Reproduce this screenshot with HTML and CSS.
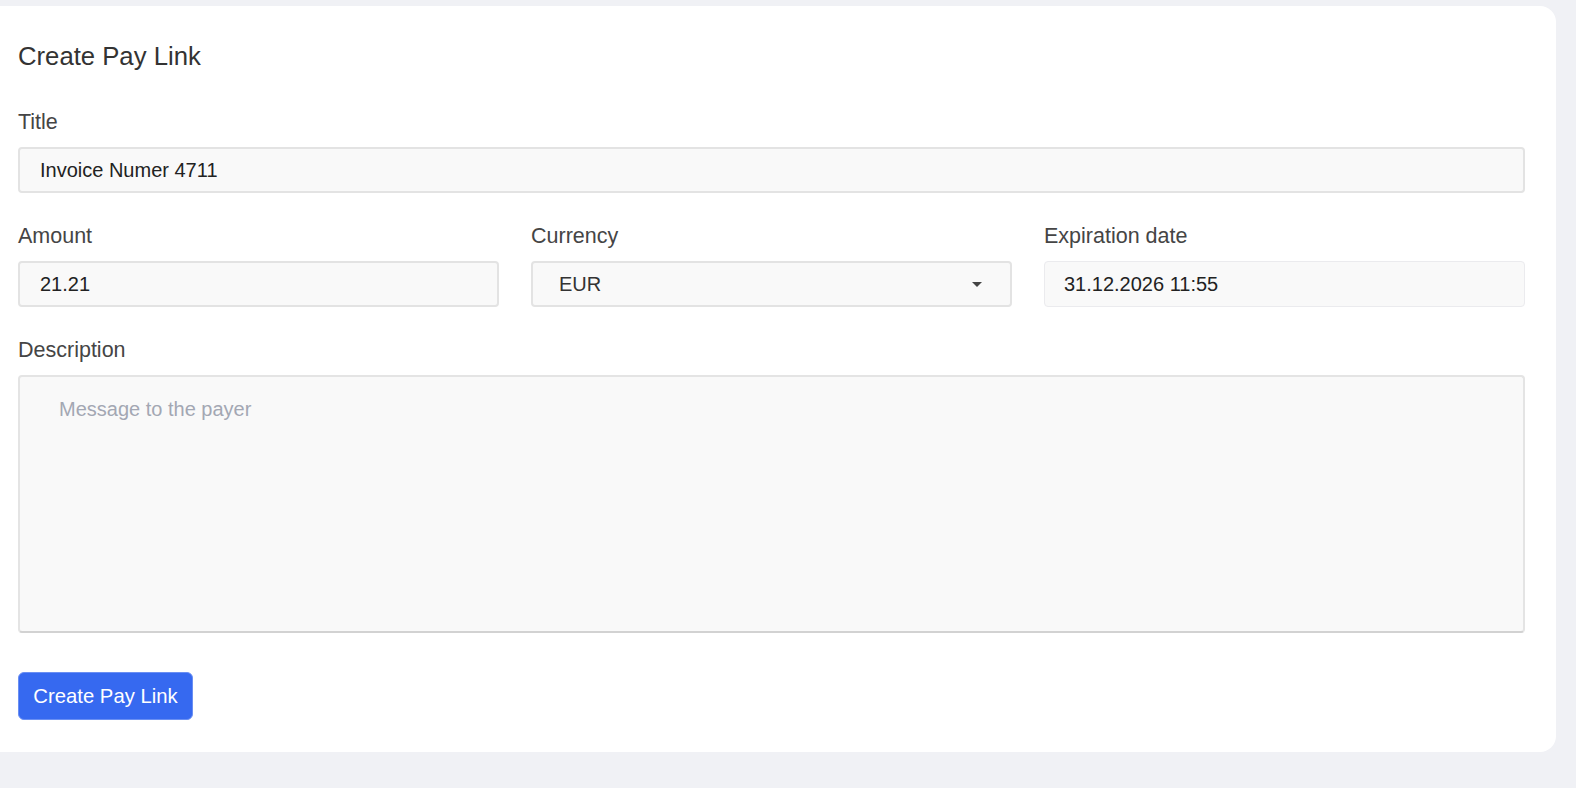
FILE: index.html
```html
<!DOCTYPE html>
<html lang="en">
<head>
<meta charset="utf-8">
<title>Create Pay Link</title>
<link rel="stylesheet" href="styles.css">
</head>
<body>
<main class="card">
  <h1 class="card-title">Create Pay Link</h1>
  <div class="field">
    <label class="label">Title</label>
    <div class="input">Invoice Numer 4711</div>
  </div>
  <div class="row">
    <div class="field">
      <label class="label">Amount</label>
      <div class="input">21.21</div>
    </div>
    <div class="field">
      <label class="label">Currency</label>
      <div class="input select"><span>EUR</span><span class="caret"></span></div>
    </div>
    <div class="field">
      <label class="label">Expiration date</label>
      <div class="input date">31.12.2026 11:55</div>
    </div>
  </div>
  <div class="field">
    <label class="label">Description</label>
    <div class="textarea"><span class="placeholder">Message to the payer</span></div>
  </div>
  <button class="btn">Create Pay Link</button>
</main>
</body>
</html>
```

FILE: styles.css
```css
* { box-sizing: border-box; }

html, body {
  margin: 0;
  padding: 0;
  background: #f0f1f5;
  font-family: "Liberation Sans", Arial, Helvetica, sans-serif;
  overflow: hidden;
}

body {
  padding-top: 6px;
}

.card {
  display: flex;
  flex-direction: column;
  align-items: stretch;
  width: 1572px;
  margin-left: -16px;
  background: #ffffff;
  border-radius: 16px;
  padding: 35px 31px 32px 34px;
}

.card-title {
  margin: 0 0 39px 0;
  font-size: 25.7px;
  line-height: 30px;
  font-weight: 400;
  color: #333333;
}

.field {
  display: flex;
  flex-direction: column;
  margin-bottom: 31px;
}

.row .field { margin-bottom: 0; }

.row {
  display: grid;
  grid-template-columns: repeat(3, 1fr);
  column-gap: 32px;
  margin-bottom: 31px;
}

.label {
  font-size: 21.5px;
  line-height: 24px;
  color: #454545;
  margin-bottom: 13px;
}

.input {
  height: 46px;
  display: flex;
  align-items: center;
  padding: 0 20px;
  background: #f9f9f9;
  border: 2px solid #e3e3e3;
  border-radius: 4px;
  font-size: 20px;
  color: #222222;
}

.select {
  position: relative;
  justify-content: space-between;
  padding: 0 28px 0 26px;
  color: #333333;
}

.caret {
  width: 0;
  height: 0;
  border-left: 5px solid transparent;
  border-right: 5px solid transparent;
  border-top: 5px solid #444444;
}

.date {
  border: 1px solid #ebebee;
  padding-left: 19px;
}

.textarea {
  height: 258px;
  padding: 21px 39px;
  background: #f9f9f9;
  border: 2px solid #e4e4e4;
  border-bottom-color: #d2d2d2;
  border-radius: 4px;
  font-size: 20px;
}

.placeholder {
  color: #a3a7b3;
}

.field:has(.textarea) { margin-bottom: 39px; }

.btn {
  align-self: flex-start;
  height: 48px;
  width: 175px;
  padding: 0;
  background: #3669f0;
  border: 1px solid #6a8ff3;
  border-radius: 6px;
  color: #ffffff;
  font-family: "Liberation Sans", Arial, Helvetica, sans-serif;
  font-size: 20.3px;
}
```
